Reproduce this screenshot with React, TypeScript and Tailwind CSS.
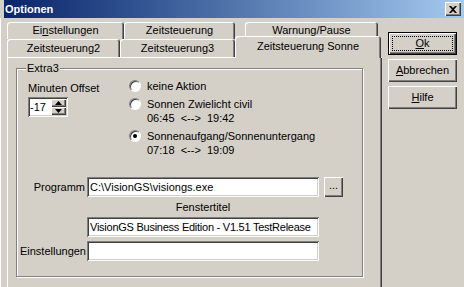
import type { ReactNode } from "react"

const raised =
  "shadow-[inset_1px_1px_#ffffff,inset_-1px_-1px_#404040,inset_-2px_-2px_#808080]"
const sunken =
  "shadow-[inset_1px_1px_#808080,inset_-1px_-1px_#ffffff,inset_2px_2px_#404040,inset_-2px_-2px_#d4d0c8]"
const tabEdge =
  "rounded-t-[3px] shadow-[inset_1px_1px_#ffffff,inset_-1px_0_#404040,inset_-2px_0_#808080]"

function Tab({ children, className = "" }: { children: ReactNode; className?: string }) {
  return (
    <div className={`flex items-center justify-center bg-[#d4d0c8] ${tabEdge} ${className}`}>
      {children}
    </div>
  )
}

function Radio({ checked = false }: { checked?: boolean }) {
  return (
    <div className="mt-[1px] flex h-[12px] w-[12px] shrink-0 items-center justify-center rounded-full border border-b-white border-l-[#808080] border-r-white border-t-[#808080] bg-white shadow-[inset_1px_1px_#404040]">
      {checked && <div className="h-[4px] w-[4px] rounded-full bg-black" />}
    </div>
  )
}

function Field({ value = "", className = "" }: { value?: string; className?: string }) {
  return (
    <div className={`flex h-[20px] items-center overflow-hidden whitespace-nowrap bg-white pl-[3px] ${sunken} ${className}`}>
      {value}
    </div>
  )
}

function Button({ children, isDefault = false }: { children: ReactNode; isDefault?: boolean }) {
  if (isDefault) {
    return (
      <div className="h-[23px] w-[69px] border border-black">
        <div className={`flex h-full w-full items-center justify-center p-[3px] ${raised}`}>
          <div className="flex h-full w-full items-center justify-center border border-dotted border-black">
            {children}
          </div>
        </div>
      </div>
    )
  }
  return (
    <div className={`flex h-[23px] w-[69px] items-center justify-center ${raised}`}>{children}</div>
  )
}

export default function App() {
  return (
    <div className="relative h-[287px] w-[464px] overflow-hidden bg-[#d4d0c8] font-['Liberation_Sans',Arial,sans-serif] text-[11px] leading-[13px] text-black">
      {/* Title bar */}
      <div className="ml-[4px] flex h-[18px] items-center justify-between bg-gradient-to-r from-[#0a246a] to-[#a6caf0] pl-[1px] pr-[3px]">
        <span className="text-[11px] font-bold text-white">Optionen</span>
        <div className={`flex h-[14px] w-[16px] items-center justify-center bg-[#d4d0c8] ${raised}`}>
          <svg width="8" height="7" viewBox="0 0 8 7">
            <path d="M0 0h2l2 2 2-2h2L5 3.5 8 7H6L4 5 2 7H0l3-3.5z" fill="#000" />
          </svg>
        </div>
      </div>

      <div className="flex border-l border-l-[#ffffff]">
        {/* Tabs and page */}
        <div className="w-[380px] pl-[6px] pt-[4px]">
          <div className="flex h-[17px]">
            <Tab className="w-[117px]">
              <span>
                Ei<span className="underline">n</span>stellungen
              </span>
            </Tab>
            <Tab className="w-[111px]">Zeitsteuerung</Tab>
            <Tab className="ml-[10px] w-[133px]">Warnung/Pause</Tab>
          </div>
          <div className="flex h-[18px] items-end">
            <Tab className="h-[18px] w-[113px]">Zeitsteuerung2</Tab>
            <Tab className="h-[18px] w-[115px]">Zeitsteuerung3</Tab>
            <Tab className="relative z-10 -mb-px h-[22px] w-[146px] pb-[2px]">Zeitsteuerung Sonne</Tab>
          </div>

          <div className="h-[240px] w-[375px] pl-[9px] pt-[11px] shadow-[inset_1px_1px_#ffffff,inset_-1px_0_#404040,inset_-2px_0_#808080]">
            {/* Group box */}
            <div className="relative h-[209px] w-[347px] border border-[#808080] shadow-[1px_1px_0_#ffffff,inset_1px_1px_0_#ffffff]">
              <span className="absolute -top-[7px] left-[9px] bg-[#d4d0c8] px-[1px]">Extra3</span>

              <div className="flex pt-[10px]">
                <div className="w-[112px] pl-[11px] pt-[3px]">
                  <div>Minuten Offset</div>
                  <div className={`mt-[2px] flex h-[20px] w-[40px] items-center bg-white pl-[2px] pr-[2px] ${sunken}`}>
                    <span className="flex-1">-17</span>
                    <div className="flex h-[16px] w-[15px] flex-col">
                      <div className={`flex h-[8px] items-center justify-center bg-[#d4d0c8] ${raised}`}>
                        <svg width="7" height="4" viewBox="0 0 7 4">
                          <path d="M3.5 0L7 4H0z" fill="#000" />
                        </svg>
                      </div>
                      <div className={`flex h-[8px] items-center justify-center bg-[#d4d0c8] ${raised}`}>
                        <svg width="7" height="4" viewBox="0 0 7 4">
                          <path d="M0 0h7L3.5 4z" fill="#000" />
                        </svg>
                      </div>
                    </div>
                  </div>
                </div>

                <div className="flex flex-col gap-[4px] leading-[14px]">
                  <div className="flex gap-[6px]">
                    <Radio />
                    <span>keine Aktion</span>
                  </div>
                  <div className="flex gap-[6px]">
                    <Radio />
                    <div>
                      <div>Sonnen Zwielicht civil</div>
                      <div className="whitespace-pre">06:45  &lt;--&gt;  19:42</div>
                    </div>
                  </div>
                  <div className="flex gap-[6px]">
                    <Radio checked />
                    <div>
                      <div>Sonnenaufgang/Sonnenuntergang</div>
                      <div className="whitespace-pre">07:18  &lt;--&gt;  19:09</div>
                    </div>
                  </div>
                </div>
              </div>

              <div className="mt-[20px] flex items-center">
                <div className="w-[70px] pr-[2px] text-right">Programm</div>
                <Field value="C:\VisionGS\visiongs.exe" className="w-[232px]" />
                <div className={`ml-[5px] flex h-[20px] w-[19px] items-center justify-center pb-[3px] ${raised}`}>
                  ...
                </div>
              </div>
              <div className="mt-[4px] flex">
                <div className="w-[70px]" />
                <div className="w-[232px] text-center">Fenstertitel</div>
              </div>
              <div className="mt-[3px] flex items-center">
                <div className="w-[70px]" />
                <Field
                  value="VisionGS Business Edition - V1.51 TestRelease"
                  className="w-[232px] tracking-[-0.25px]"
                />
              </div>
              <div className="mt-[4px] flex items-center">
                <div className="w-[70px] pr-[1px] text-right">Einstellungen</div>
                <Field className="w-[232px]" />
              </div>
            </div>
          </div>
        </div>

        {/* Dialog buttons */}
        <div className="ml-[7px] flex flex-col gap-[4px] pt-[14px]">
          <Button isDefault>
            <span>
              <span className="underline">O</span>k
            </span>
          </Button>
          <Button>
            <span>
              <span className="underline">A</span>bbrechen
            </span>
          </Button>
          <Button>
            <span>
              <span className="underline">H</span>ilfe
            </span>
          </Button>
        </div>
      </div>
    </div>
  )
}
